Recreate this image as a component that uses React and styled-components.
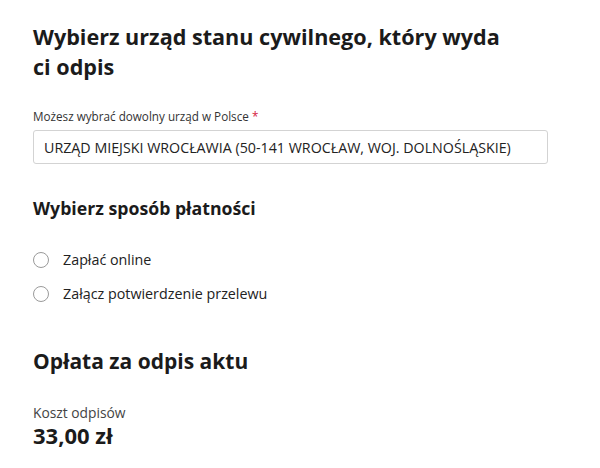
import React from 'react';
import styled, { createGlobalStyle } from 'styled-components';

const GlobalStyle = createGlobalStyle`
    body {
        margin: 0;
        background: #ffffff;
        font-family: "Open Sans", "Noto Sans", sans-serif;
        color: #1b1b1b;
    }
`;

const Page = styled.div`
    padding: 22px 52px 0 33px;
`;

const Title = styled.h1`
    margin: 0;
    font-size: 21.6px;
    line-height: 30px;
    font-weight: 700;
    width: 470px;
`;

const Field = styled.div`
    margin-top: 26px;
    display: flex;
    flex-direction: column;
`;

const Label = styled.label`
    font-size: 11.7px;
    line-height: 16px;
    color: #333;
    margin-bottom: 6px;
`;

const Required = styled.span`
    color: #d4213d;
`;

const Input = styled.div`
    height: 32px;
    border: 1px solid #d3d3d3;
    border-radius: 3px;
    display: flex;
    align-items: center;
    padding: 0 10px;
    font-size: 14.25px;
    color: #222;
`;

const Section = styled.h2`
    margin: ${p => p.$top}px 0 0;
    font-size: ${p => p.$size}px;
    line-height: 26px;
    font-weight: 700;
`;

const RadioList = styled.div`
    margin-top: 29px;
    display: flex;
    flex-direction: column;
    gap: 14px;
`;

const RadioRow = styled.label`
    display: flex;
    align-items: center;
    gap: 14px;
    font-size: 14.3px;
    line-height: 20px;
    color: #222;
`;

const Circle = styled.span`
    width: 16px;
    height: 16px;
    border-radius: 50%;
    border: 1px solid #9a9a9a;
    box-sizing: border-box;
    flex: none;
`;

const CostLabel = styled.div`
    margin-top: 30px;
    font-size: 13.8px;
    line-height: 18px;
    color: #444;
`;

const Amount = styled.div`
    font-size: 22px;
    line-height: 26px;
    font-weight: 700;
`;

export default function App() {
    return (
        <Page>
            <GlobalStyle />
            <Title>Wybierz urząd stanu cywilnego, który wyda ci odpis</Title>
            <Field>
                <Label>Możesz wybrać dowolny urząd w Polsce <Required>*</Required></Label>
                <Input>URZĄD MIEJSKI WROCŁAWIA (50-141 WROCŁAW, WOJ. DOLNOŚLĄSKIE)</Input>
            </Field>
            <Section $top={31} $size={17.7}>Wybierz sposób płatności</Section>
            <RadioList>
                <RadioRow><Circle />Zapłać online</RadioRow>
                <RadioRow><Circle />Załącz potwierdzenie przelewu</RadioRow>
            </RadioList>
            <Section $top={44} $size={21}>Opłata za odpis aktu</Section>
            <CostLabel>Koszt odpisów</CostLabel>
            <Amount>33,00 zł</Amount>
        </Page>
    );
}
